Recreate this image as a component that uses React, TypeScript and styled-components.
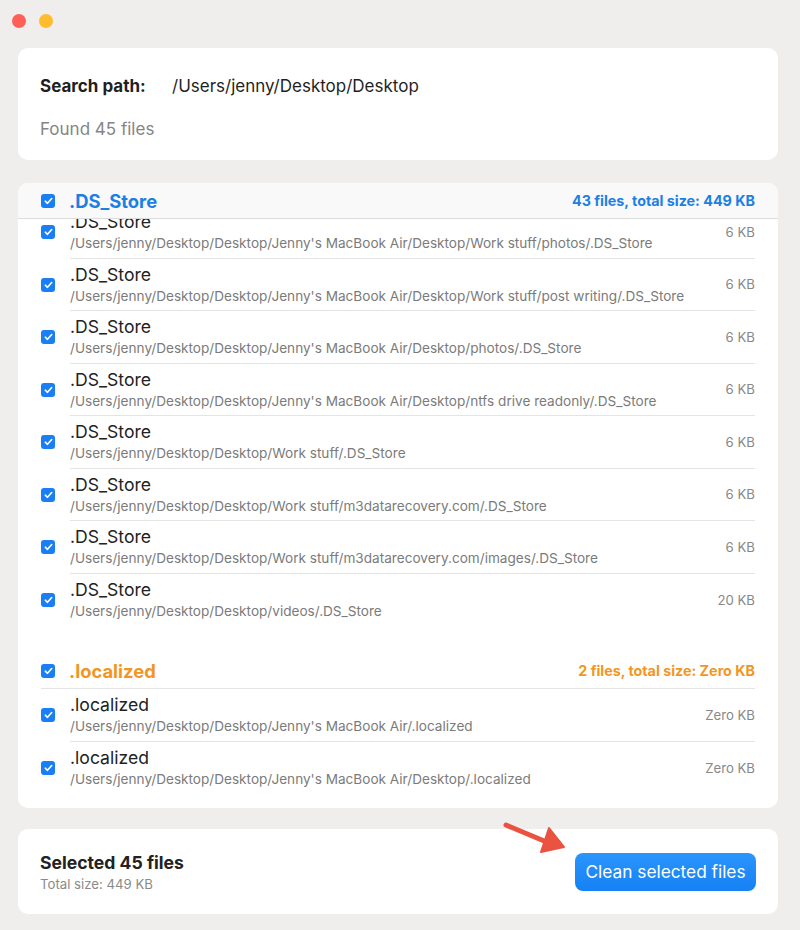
import React, { useLayoutEffect, useRef } from "react";
import styled, { createGlobalStyle } from "styled-components";

const GlobalStyle = createGlobalStyle`
  html, body {
    margin: 0;
    padding: 0;
    background: #efeeed;
  }
  body {
    font-family: Inter, "Liberation Sans", Arial, sans-serif;
    -webkit-font-smoothing: antialiased;
  }
`;

type FileItem = { name: string; path: string; size: string };
type Group = {
  title: string;
  summary: string;
  color: string;
  files: FileItem[];
};

const base = "/Users/jenny/Desktop/Desktop";

const groups: Group[] = [
  {
    title: ".DS_Store",
    summary: "43 files, total size: 449 KB",
    color: "#1c7fe3",
    files: [
      { name: ".DS_Store", path: `${base}/Jenny's MacBook Air/Desktop/Work stuff/photos/.DS_Store`, size: "6 KB" },
      { name: ".DS_Store", path: `${base}/Jenny's MacBook Air/Desktop/Work stuff/post writing/.DS_Store`, size: "6 KB" },
      { name: ".DS_Store", path: `${base}/Jenny's MacBook Air/Desktop/photos/.DS_Store`, size: "6 KB" },
      { name: ".DS_Store", path: `${base}/Jenny's MacBook Air/Desktop/ntfs drive readonly/.DS_Store`, size: "6 KB" },
      { name: ".DS_Store", path: `${base}/Work stuff/.DS_Store`, size: "6 KB" },
      { name: ".DS_Store", path: `${base}/Work stuff/m3datarecovery.com/.DS_Store`, size: "6 KB" },
      { name: ".DS_Store", path: `${base}/Work stuff/m3datarecovery.com/images/.DS_Store`, size: "6 KB" },
      { name: ".DS_Store", path: `${base}/videos/.DS_Store`, size: "20 KB" },
    ],
  },
  {
    title: ".localized",
    summary: "2 files, total size: Zero KB",
    color: "#f2961f",
    files: [
      { name: ".localized", path: `${base}/Jenny's MacBook Air/.localized`, size: "Zero KB" },
      { name: ".localized", path: `${base}/Jenny's MacBook Air/Desktop/.localized`, size: "Zero KB" },
    ],
  },
];

const Window = styled.div`
  position: relative;
  height: 930px;
  box-sizing: border-box;
  padding: 0 22px 16px 18px;
  display: flex;
  flex-direction: column;
`;

const TitleBar = styled.div`
  height: 48px;
  flex: none;
  display: flex;
  align-items: flex-start;
  gap: 13px;
  padding-top: 14px;
  margin-left: -6px;
  box-sizing: border-box;
`;

const Light = styled.span<{ $color: string }>`
  width: 14px;
  height: 14px;
  border-radius: 50%;
  background: ${(p) => p.$color};
`;

const Card = styled.div`
  background: #fff;
  border-radius: 10px;
  flex: none;
`;

const SearchCard = styled(Card)`
  height: 112px;
  box-sizing: border-box;
  padding: 28px 22px 0;
  display: flex;
  flex-direction: column;
  gap: 22px;
`;

const SearchLine = styled.div`
  display: flex;
  align-items: baseline;
  font-size: 17px;
  line-height: 21px;
  color: #1f1f1f;
`;

const SearchLabel = styled.span`
  font-weight: 700;
  width: 132px;
`;

const Found = styled.div`
  font-size: 17px;
  line-height: 21px;
  color: #858585;
`;

const ListCard = styled(Card)`
  margin-top: 23px;
  height: 625px;
  overflow: hidden;
`;

const Scroller = styled.div`
  height: 100%;
  overflow: hidden;
`;

const Content = styled.div`
  padding-bottom: 30px;
`;

const Section = styled.section<{ $gap: boolean }>`
  margin-top: ${(p) => (p.$gap ? "27px" : "0")};
`;

const GroupHeader = styled.div<{ $stuck: boolean }>`
  position: sticky;
  top: 0;
  z-index: 2;
  height: 36px;
  box-sizing: border-box;
  padding: 0 23px;
  background: ${(p) => (p.$stuck ? "#f9f9f9" : "#fff")};
  border-bottom: ${(p) => (p.$stuck ? "1px solid #dcdcdc" : "none")};
  display: flex;
`;

const GroupHeaderInner = styled.div<{ $stuck: boolean }>`
  flex: 1;
  display: flex;
  align-items: center;
  gap: 14px;
  border-bottom: ${(p) => (p.$stuck ? "none" : "1px solid #e4e4e4")};
`;

const GroupTitle = styled.span<{ $color: string }>`
  font-size: 18.4px;
  font-weight: 700;
  color: ${(p) => p.$color};
  flex: 1;
`;

const GroupSummary = styled.span<{ $color: string }>`
  font-size: 14.3px;
  font-weight: 700;
  color: ${(p) => p.$color};
`;

const Row = styled.div`
  height: 52.5px;
  display: flex;
  align-items: center;
  padding: 0 23px;
  gap: 15px;
`;

const RowBody = styled.div<{ $last: boolean }>`
  flex: 1;
  align-self: stretch;
  display: flex;
  align-items: center;
  border-bottom: ${(p) => (p.$last ? "none" : "1px solid #e4e4e4")};
`;

const RowText = styled.div`
  flex: 1;
  display: flex;
  flex-direction: column;
  gap: 3px;
`;

const FileName = styled.span`
  font-size: 17.6px;
  line-height: 21px;
  color: #222;
`;

const FilePath = styled.span`
  font-size: 13.6px;
  line-height: 17px;
  color: #7b7b7b;
  white-space: nowrap;
`;

const FileSize = styled.span`
  font-size: 13.2px;
  color: #888;
`;

const CheckBox = styled.span`
  width: 14px;
  height: 14px;
  flex: none;
  border-radius: 3px;
  background: #1a7ff5;
  display: flex;
  align-items: center;
  justify-content: center;
`;

const FooterCard = styled(Card)`
  margin-top: 21px;
  height: 85px;
  box-sizing: border-box;
  padding: 0 22px;
  display: flex;
  align-items: center;
`;

const FooterText = styled.div`
  flex: 1;
  display: flex;
  flex-direction: column;
  gap: 3px;
`;

const Selected = styled.span`
  font-size: 17.6px;
  font-weight: 700;
  color: #222;
`;

const TotalSize = styled.span`
  font-size: 13.2px;
  color: #8a8a8a;
`;

const CleanButton = styled.button`
  width: 181px;
  height: 38px;
  border: none;
  border-radius: 8px;
  background: linear-gradient(#2b95fc, #1581f3);
  color: #fff;
  font-family: inherit;
  font-size: 17.3px;
  padding: 0;
`;

const ArrowMark = styled.svg`
  position: absolute;
  left: 499px;
  top: 818px;
  pointer-events: none;
`;

const Check = () => (
  <CheckBox>
    <svg width="9" height="8" viewBox="0 0 9 8">
      <path d="M1.3 4.2 L3.5 6.3 L7.7 1.5" fill="none" stroke="#fff" strokeWidth="1.6" strokeLinecap="round" strokeLinejoin="round" />
    </svg>
  </CheckBox>
);

export default function App() {
  const scroller = useRef<HTMLDivElement>(null);

  useLayoutEffect(() => {
    if (scroller.current) scroller.current.scrollTop = 13;
  }, []);

  return (
    <>
      <GlobalStyle />
      <Window>
        <TitleBar>
          <Light $color="#fe5f57" />
          <Light $color="#febc2e" />
        </TitleBar>

        <SearchCard>
          <SearchLine>
            <SearchLabel>Search path:</SearchLabel>
            <span>/Users/jenny/Desktop/Desktop</span>
          </SearchLine>
          <Found>Found 45 files</Found>
        </SearchCard>

        <ListCard>
          <Scroller ref={scroller}>
            <Content>
              {groups.map((g, gi) => (
                <Section key={g.title} $gap={gi > 0}>
                  <GroupHeader $stuck={gi === 0}>
                    <GroupHeaderInner $stuck={gi === 0}>
                      <Check />
                      <GroupTitle $color={g.color}>{g.title}</GroupTitle>
                      <GroupSummary $color={g.color}>{g.summary}</GroupSummary>
                    </GroupHeaderInner>
                  </GroupHeader>
                  {g.files.map((f, i) => (
                    <Row key={i}>
                      <Check />
                      <RowBody $last={i === g.files.length - 1}>
                        <RowText>
                          <FileName>{f.name}</FileName>
                          <FilePath>{f.path}</FilePath>
                        </RowText>
                        <FileSize>{f.size}</FileSize>
                      </RowBody>
                    </Row>
                  ))}
                </Section>
              ))}
            </Content>
          </Scroller>
        </ListCard>

        <FooterCard>
          <FooterText>
            <Selected>Selected 45 files</Selected>
            <TotalSize>Total size: 449 KB</TotalSize>
          </FooterText>
          <CleanButton>Clean selected files</CleanButton>
        </FooterCard>

        <ArrowMark width="70" height="40" viewBox="0 0 70 40">
          <path d="M7 7 L50 25" stroke="#e9533f" strokeWidth="5" strokeLinecap="round" />
          <path d="M65 29 L50 10 L42 34 Z" fill="#e9533f" stroke="#e9533f" strokeWidth="2" strokeLinejoin="round" />
        </ArrowMark>
      </Window>
    </>
  );
}
